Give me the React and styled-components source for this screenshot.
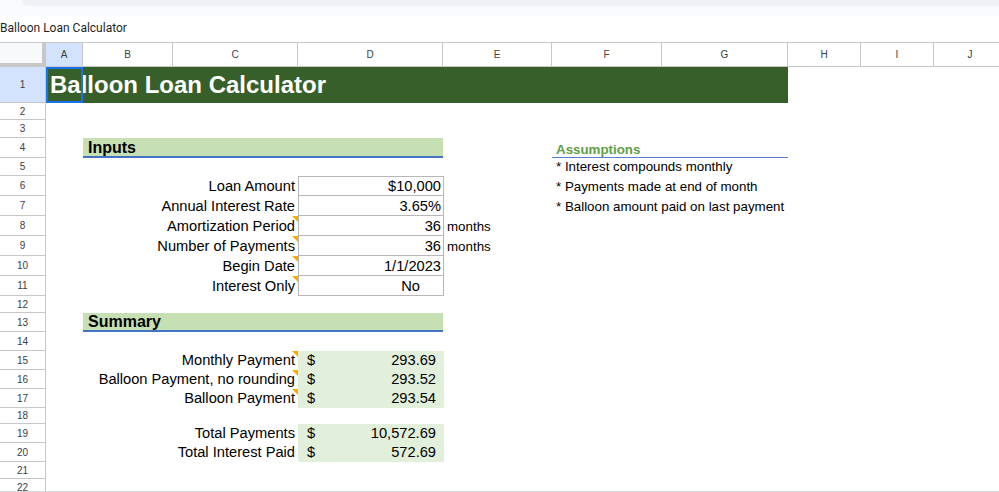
import React from "react";
import styled, { createGlobalStyle } from "styled-components";

const GlobalStyle = createGlobalStyle`
  html, body { margin: 0; padding: 0; background: #ffffff; }
  body { font-family: "Liberation Sans", Arial, sans-serif; color: #000; }
  * { box-sizing: border-box; }
`;

const COLUMNS = ["A", "B", "C", "D", "E", "F", "G", "H", "I", "J"];
const COL_WIDTHS = [46, 37, 90, 125, 145, 109, 110, 126, 73, 73, 73];
const ROW_HEIGHTS = [36, 17, 18, 20, 18, 20, 20, 20, 20, 20, 20, 17, 19, 19, 19, 19, 19, 16, 19, 19, 17, 17];

const GRID_LINE = "#c7c7c7";
const HEAD_BAND = "#c6e0b4";
const RULE_BLUE = "#4472c4";
const SUM_FILL = "#e2efda";

const Page = styled.div`
  height: 100vh;
  display: flex;
  flex-direction: column;
  overflow: hidden;
  border-bottom: 1px solid #dadce0;
`;

const Chrome = styled.div`
  height: 16px;
  flex: none;
  background: #f9fafd;
  display: flex;
`;

const ChromePill = styled.div`
  margin-left: 22px;
  flex: 1;
  height: 6px;
  background: #eef1f6;
  border-bottom-left-radius: 8px;
`;

const DocTitle = styled.div`
  height: 26px;
  flex: none;
  display: flex;
  align-items: center;
  padding-bottom: 3px;
  font-family: Roboto, "Liberation Sans", sans-serif;
  font-size: 12px;
  color: #1f1f1f;
`;

const Sheet = styled.div`
  flex: 1;
  display: grid;
  grid-template-columns: ${COL_WIDTHS.map((w) => `${w}px`).join(" ")};
  grid-template-rows: 24px ${ROW_HEIGHTS.map((h) => `${h}px`).join(" ")};
  border-top: 1px solid ${GRID_LINE};
  overflow: hidden;
  align-content: start;
`;

const Corner = styled.div`
  grid-row: 1;
  grid-column: 1;
  background: #f8f9fa;
  border-right: 4px solid ${GRID_LINE};
  border-bottom: 4px solid ${GRID_LINE};
`;

const ColHead = styled.div`
  grid-row: 1;
  grid-column: ${(p) => p.$col + 2};
  display: flex;
  align-items: center;
  justify-content: center;
  font-size: 10px;
  color: #3c4043;
  background: ${(p) => (p.$active ? "#d3e3fd" : "#fff")};
  border-right: 1px solid ${GRID_LINE};
  border-bottom: 1px solid ${GRID_LINE};
`;

const RowHead = styled.div`
  grid-row: ${(p) => p.$row + 1};
  grid-column: 1;
  display: flex;
  align-items: center;
  justify-content: center;
  font-size: 10px;
  color: #3c4043;
  background: ${(p) => (p.$active ? "#d3e3fd" : "#fff")};
  border-right: 1px solid ${GRID_LINE};
  border-bottom: 1px solid ${GRID_LINE};
`;

const TitleBand = styled.div`
  grid-row: 2;
  grid-column: 2 / 9;
  position: relative;
  background: #375f2a;
  color: #fff;
  display: flex;
  align-items: center;
  padding-left: 4px;
  font-size: 24px;
  font-weight: 700;
  line-height: 1.15;
  white-space: nowrap;
`;

const Selection = styled.div`
  position: absolute;
  left: 0;
  top: 0;
  width: 37px;
  height: 100%;
  border: 2px solid #1a73e8;
`;

const SectionBand = styled.div`
  grid-row: ${(p) => p.$row + 1};
  grid-column: 3 / 6;
  background: ${HEAD_BAND};
  border-bottom: 2px solid ${RULE_BLUE};
  display: flex;
  align-items: flex-end;
  padding-left: 5px;
  font-size: 16px;
  font-weight: 700;
  line-height: 1;
`;

const AssumptionsHead = styled.div`
  grid-row: 5;
  grid-column: 7 / 9;
  border-bottom: 1px solid #5a7fc9;
  display: flex;
  align-items: flex-end;
  padding: 0 4px 0 4px;
  font-size: 13.33px;
  font-weight: 700;
  line-height: 1.15;
  color: #5f9e44;
`;

const NoteLine = styled.div`
  grid-row: ${(p) => p.$row + 1};
  grid-column: 7 / 10;
  display: flex;
  align-items: flex-end;
  padding: 0 4px 2px 4px;
  font-size: 13.33px;
  line-height: 1.15;
  white-space: nowrap;
`;

const Label = styled.div`
  grid-row: ${(p) => p.$row + 1};
  grid-column: 3 / 5;
  position: relative;
  display: flex;
  align-items: flex-end;
  justify-content: flex-end;
  padding: 0 3px 1px 0;
  font-size: 14.67px;
  line-height: 1.15;
  white-space: nowrap;
`;

const CommentMark = styled.span`
  position: absolute;
  top: 0;
  right: 0;
  width: 0;
  height: 0;
  border-top: 6px solid #f9ab00;
  border-left: 6px solid transparent;
`;

const InputValue = styled.div`
  grid-row: ${(p) => p.$row + 1};
  grid-column: 5;
  display: flex;
  align-items: flex-end;
  justify-content: flex-end;
  padding: 0 ${(p) => p.$padRight}px 0 0;
  margin-right: -1px;
  font-size: 14.67px;
  line-height: 1.15;
  border: 1px solid #b7b7b7;
  border-top-width: ${(p) => (p.$first ? 1 : 0)}px;
`;

const Unit = styled.div`
  grid-row: ${(p) => p.$row + 1};
  grid-column: 6;
  display: flex;
  align-items: flex-end;
  padding: 0 4px 2px 4px;
  font-size: 13.33px;
  line-height: 1.15;
`;

const SummaryValue = styled.div`
  grid-row: ${(p) => p.$row + 1};
  grid-column: 5;
  margin-right: -1px;
  background: ${SUM_FILL};
  display: flex;
  align-items: flex-end;
  justify-content: space-between;
  padding: 0 8px 1px 9px;
  font-size: 14.67px;
  line-height: 1.15;
`;

const inputs = [
  { row: 6, label: "Loan Amount", value: "$10,000" },
  { row: 7, label: "Annual Interest Rate", value: "3.65%" },
  { row: 8, label: "Amortization Period", value: "36", unit: "months", note: true },
  { row: 9, label: "Number of Payments", value: "36", unit: "months", note: true },
  { row: 10, label: "Begin Date", value: "1/1/2023", note: true },
  { row: 11, label: "Interest Only", value: "No", note: true, pad: 23 },
];

const summary = [
  { row: 15, label: "Monthly Payment", value: "293.69", note: true },
  { row: 16, label: "Balloon Payment, no rounding", value: "293.52", note: true },
  { row: 17, label: "Balloon Payment", value: "293.54", note: true },
  { row: 19, label: "Total Payments", value: "10,572.69" },
  { row: 20, label: "Total Interest Paid", value: "572.69" },
];

const assumptions = [
  "* Interest compounds monthly",
  "* Payments made at end of month",
  "* Balloon amount paid on last payment",
];

export default function App() {
  return (
    <>
      <GlobalStyle />
      <Page>
        <Chrome>
          <ChromePill />
        </Chrome>
        <DocTitle>Balloon Loan Calculator</DocTitle>
        <Sheet>
          <Corner />
          {COLUMNS.map((c, i) => (
            <ColHead key={c} $col={i} $active={i === 0}>
              {c}
            </ColHead>
          ))}
          {ROW_HEIGHTS.map((_, i) => (
            <RowHead key={i} $row={i + 1} $active={i === 0}>
              {i + 1}
            </RowHead>
          ))}

          <TitleBand>
            Balloon Loan Calculator
            <Selection />
          </TitleBand>

          <SectionBand $row={4}>Inputs</SectionBand>
          {inputs.map((r, i) => (
            <React.Fragment key={r.row}>
              <Label $row={r.row}>
                {r.label}
                {r.note && <CommentMark />}
              </Label>
              <InputValue $row={r.row} $first={i === 0} $padRight={r.pad || 2}>
                {r.value}
              </InputValue>
              {r.unit && <Unit $row={r.row}>{r.unit}</Unit>}
            </React.Fragment>
          ))}

          <AssumptionsHead>Assumptions</AssumptionsHead>
          {assumptions.map((t, i) => (
            <NoteLine key={t} $row={5 + i}>
              {t}
            </NoteLine>
          ))}

          <SectionBand $row={13}>Summary</SectionBand>
          {summary.map((r) => (
            <React.Fragment key={r.row}>
              <Label $row={r.row}>
                {r.label}
                {r.note && <CommentMark />}
              </Label>
              <SummaryValue $row={r.row}>
                <span>$</span>
                <span>{r.value}</span>
              </SummaryValue>
            </React.Fragment>
          ))}
        </Sheet>
      </Page>
    </>
  );
}
